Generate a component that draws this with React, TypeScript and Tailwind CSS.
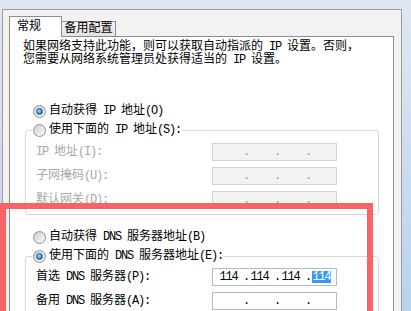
import React from 'react';

const ascii = /([\x20-\x7e]+)/;

// SimSun draws latin chars at half width; squeeze the mono runs to 6px
const T: React.FC<{ s: string }> = ({ s }) => (
  <>
    {s.split(ascii).map((p, i) =>
      i % 2 === 1 ? (
        <span key={i} className="tracking-[-1.2px]">
          {p}
        </span>
      ) : (
        <React.Fragment key={i}>{p}</React.Fragment>
      )
    )}
  </>
);

const Radio: React.FC<{ on?: boolean }> = ({ on }) => (
  <span className="flex h-[13px] w-[13px] shrink-0 items-center justify-center rounded-full border border-[#8f9092] bg-linear-to-br from-[#cfcfcf] to-[#fbfbfb]">
    {on && (
      <span className="h-[7px] w-[7px] rounded-full border border-[#1d5f96] bg-[radial-gradient(circle_at_35%_35%,#9bd6f7,#2a7cbf_75%)]" />
    )}
  </span>
);

const RadioLine: React.FC<{ on?: boolean; label: string }> = ({ on, label }) => (
  <div className="flex h-[19px] items-center gap-[3px]">
    <Radio on={on} />
    <span className="leading-[13px]">
      <T s={label} />
    </span>
  </div>
);

const IpBox: React.FC<{ values?: string[]; disabled?: boolean }> = ({ values, disabled }) => {
  const segs = values ?? ['', '', '', ''];
  return (
    <div
      className={`flex h-[18px] w-[125px] items-center border pl-[1px] ${
        disabled ? 'border-[#d3d3d3] bg-[#f3f3f3] text-[#9a9a9a]' : 'border-[#b9b9b9] bg-white text-black'
      }`}
    >
      {segs.map((v, i) => (
        <React.Fragment key={i}>
          {i > 0 && <span className="w-[2px] text-center leading-[13px] tracking-[-1.2px]">.</span>}
          <span className="flex w-[29px] justify-center leading-[13px]">
            {i === 3 && v ? (
              <span className="inline-block h-[12px] bg-[#3399ff] leading-[12px] text-white tracking-[-1.2px]">
                {v}
              </span>
            ) : (
              <span className="tracking-[-1.2px]">{v}</span>
            )}
          </span>
        </React.Fragment>
      ))}
    </div>
  );
};

const FieldRow: React.FC<{ label: string; disabled?: boolean; values?: string[] }> = ({
  label,
  disabled,
  values
}) => (
  <div className="flex h-[18px] items-center">
    <span className={`w-[176px] leading-[13px] ${disabled ? 'text-[#a8a8a8]' : 'text-black'}`}>
      <T s={label} />
    </span>
    <IpBox values={values} disabled={disabled} />
  </div>
);

const Group: React.FC<{ on?: boolean; label: string; children: React.ReactNode; pt: string }> = ({
  on,
  label,
  children,
  pt
}) => (
  <fieldset className="ml-[15px] w-[354px] rounded-[3px] border border-[#d7d7d7]">
    <legend className="ml-[6px] px-[1px]">
      <RadioLine on={on} label={label} />
    </legend>
    <div className={`flex flex-col gap-[6px] pb-[5px] pl-[10px] ${pt}`}>{children}</div>
  </fieldset>
);

export default function App() {
  return (
    <div className="relative h-[311px] w-[411px] overflow-hidden bg-linear-to-b from-[#dfe8f2] to-[#b9d2ee] font-['Liberation_Mono','Noto_Sans_CJK_SC',monospace] text-[12px] text-black">
      <div className="h-[9px]" />
      <div className="ml-[2px] h-[320px] w-[400px] border-x border-t border-[#9c9c9c] bg-[#f4f1f1] pl-[6px] pr-[7px] pt-[6px]">
        {/* tabs */}
        <div className="relative z-10 -mb-px flex items-end">
          <div className="flex h-[21px] w-[53px] items-center border-x border-t border-[#898c95] bg-white pb-[1px] pl-[7px]">
            常规
          </div>
          <div className="flex h-[16px] w-[54px] items-center justify-center border-y border-r border-[#898c95] bg-linear-to-b from-[#f4f4f4] to-[#e2e2e2]">
            备用配置
          </div>
        </div>

        {/* panel */}
        <div className="h-[300px] border border-[#898c95] bg-white">
          <div className="pl-[13px] pt-[4px] leading-[13px]">
            <div>
              <T s="如果网络支持此功能，则可以获取自动指派的 IP 设置。否则，" />
            </div>
            <div>
              <T s="您需要从网络系统管理员处获得适当的 IP 设置。" />
            </div>
          </div>

          <div className="mt-[35px] pl-[23px]">
            <RadioLine on label="自动获得 IP 地址(O)" />
          </div>
          <Group label="使用下面的 IP 地址(S):" pt="pt-[3px]">
            <FieldRow label="IP 地址(I):" disabled />
            <FieldRow label="子网掩码(U):" disabled />
            <FieldRow label="默认网关(D):" disabled />
          </Group>

          <div className="mt-[13px] pl-[23px]">
            <RadioLine label="自动获得 DNS 服务器地址(B)" />
          </div>
          <Group on label="使用下面的 DNS 服务器地址(E):" pt="pt-[2px]">
            <FieldRow label="首选 DNS 服务器(P):" values={['114', '114', '114', '114']} />
            <FieldRow label="备用 DNS 服务器(A):" />
          </Group>
        </div>
      </div>

      {/* annotation */}
      <div className="absolute left-0 top-[203px] h-[140px] w-[373px] border-[6px] border-[#f86466]" />
    </div>
  );
}
